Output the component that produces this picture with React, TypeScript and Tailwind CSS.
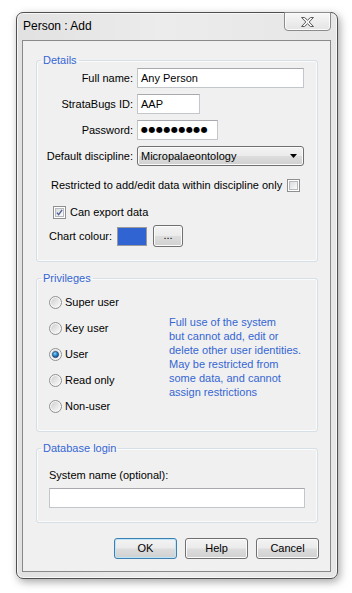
import React from "react";

const FONT = "font-['Liberation_Sans',Arial,sans-serif]";
const BTN_BG = "bg-[linear-gradient(#f3f3f3_0%,#ebebeb_48%,#dddddd_52%,#d0d0d0_100%)]";

const Checkbox = ({ checked = false }: { checked?: boolean }) => (
  <span className="flex size-[13px] shrink-0 items-center justify-center border border-[#8e8f8f] bg-white p-[1px]">
    <span className="flex size-full items-center justify-center border border-[#b6b9bd] bg-gradient-to-br from-[#dcdcdc] to-[#fbfbfb]">
      {checked && (
        <svg width="9" height="9" viewBox="0 0 9 9">
          <path d="M1.2 4.6 L3.4 7.2 L7.8 1.2" fill="none" stroke="#4a5f97" strokeWidth="1.7" />
        </svg>
      )}
    </span>
  </span>
);

const Radio = ({ checked = false }: { checked?: boolean }) => (
  <svg width="13" height="13" viewBox="0 0 13 13" className="shrink-0">
    <defs>
      <linearGradient id="radioFill" x1="0" y1="0" x2="1" y2="1">
        <stop offset="0" stopColor="#cfcfcf" />
        <stop offset="1" stopColor="#fafafa" />
      </linearGradient>
      <radialGradient id="radioDot" cx="0.4" cy="0.35" r="0.7">
        <stop offset="0" stopColor="#8ad8ff" />
        <stop offset="0.5" stopColor="#2a86cf" />
        <stop offset="1" stopColor="#13406f" />
      </radialGradient>
    </defs>
    <circle cx="6.5" cy="6.5" r="6" fill="#f6f6f6" stroke="#8e8f8f" />
    <circle cx="6.5" cy="6.5" r="4.4" fill="url(#radioFill)" />
    {checked && <circle cx="6.5" cy="6.5" r="3.1" fill="url(#radioDot)" stroke="#1b3f6a" strokeWidth="0.7" />}
  </svg>
);

const TextBox = ({ className = "", children }: { className?: string; children?: React.ReactNode }) => (
  <div
    className={`flex h-[20px] items-center border border-[#c3c6cb] border-t-[#a7a9ae] bg-white px-[3px] ${className}`}
  >
    {children}
  </div>
);

const Button = ({ children, primary = false }: { children: React.ReactNode; primary?: boolean }) => (
  <button
    className={
      primary
        ? `h-[21px] w-[63px] rounded-[3px] border border-[#3c7fb1] ${BTN_BG} shadow-[inset_0_0_0_1px_#bfe6f8]`
        : `h-[21px] w-[63px] rounded-[3px] border border-[#707070] ${BTN_BG} shadow-[inset_0_0_0_1px_#fbfbfb]`
    }
  >
    {children}
  </button>
);

const Group = ({
  title,
  className = "",
  children,
}: {
  title: string;
  className?: string;
  children: React.ReactNode;
}) => (
  <fieldset
    className={`ml-[13px] w-[282px] rounded-[3px] border border-[#d5dfe5] shadow-[inset_0_0_0_1px_#fbfbfb] ${className}`}
  >
    <legend className="ml-[4px] px-[2px] leading-[14px] text-[#3566d3]">{title}</legend>
    {children}
  </fieldset>
);

const ROLES = [
  { id: 1, title: "Super user" },
  { id: 2, title: "Key user" },
  { id: 3, title: "User" },
  { id: 4, title: "Read only" },
  { id: 5, title: "Non-user" },
];

const App = () => {
  return (
    <div className={`h-[593px] w-[352px] bg-white pl-[16px] pt-[12px] text-[11px] text-black ${FONT}`}>
      <div className="flex h-[567px] w-[322px] flex-col rounded-[7px] border border-[#4f4f4f] bg-[linear-gradient(90deg,#e1e1e1,#ececec_45%,#e6e6e6)] pb-[6px] pl-[5px] pr-[6px] shadow-[2px_3px_9px_rgba(0,0,0,0.35),inset_0_0_0_1px_#f7f7f7]">
        {/* Title bar */}
        <div className="flex h-[27px] items-start justify-between">
          <span className="pl-[1px] pt-[5px] text-[12px] leading-[16px]">Person : Add</span>
          <button className="-mt-px flex h-[19px] w-[47px] items-center justify-center rounded-b-[4px] border border-[#8b8b8b] bg-[linear-gradient(#f7f7f7,#e4e4e4)] shadow-[inset_0_0_0_1px_#fbfbfb]">
            <svg width="13" height="10" viewBox="0 0 13 10">
              <path
                d="M0.5 0.5 H3.6 L6.5 3.2 L9.4 0.5 H12.5 L8.2 5 L12.5 9.5 H9.4 L6.5 6.8 L3.6 9.5 H0.5 L4.8 5 Z"
                fill="#f4f4f4"
                stroke="#5c5c5c"
                strokeWidth="1"
                strokeLinejoin="round"
              />
            </svg>
          </button>
        </div>

        {/* Client area */}
        <div className="flex h-[532px] flex-col border border-[#898989] bg-[#f0f0f0]">
          <Group title="Details" className="mt-[12px] pb-[14px] pt-[1px]">
            <div className="flex flex-col gap-[6px] pl-[6px]">
              <div className="flex items-center">
                <span className="mr-[4px] w-[90px] whitespace-nowrap text-right">Full name:</span>
                <TextBox className="w-[167px]">Any Person</TextBox>
              </div>
              <div className="flex items-center">
                <span className="mr-[4px] w-[90px] whitespace-nowrap text-right">StrataBugs ID:</span>
                <TextBox className="w-[63px]">AAP</TextBox>
              </div>
              <div className="flex items-center">
                <span className="mr-[4px] w-[90px] whitespace-nowrap text-right">Password:</span>
                <TextBox className="w-[81px]">
                  <span className="font-['DejaVu_Sans',sans-serif] text-[8px] tracking-[0.5px]">●●●●●●●●●</span>
                </TextBox>
              </div>
              <div className="flex items-center">
                <span className="mr-[4px] w-[90px] whitespace-nowrap text-right">Default discipline:</span>
                <div className={`flex h-[20px] w-[167px] items-center justify-between rounded-[3px] border border-[#707070] ${BTN_BG} pl-[3px] pr-[6px] shadow-[inset_0_0_0_1px_#fbfbfb]`}>
                  <span>Micropalaeontology</span>
                  <svg width="7" height="4" viewBox="0 0 7 4">
                    <path d="M0 0 H7 L3.5 4 Z" fill="#000" />
                  </svg>
                </div>
              </div>
            </div>

            <div className="mt-[9px] flex h-[20px] items-center gap-[5px] pl-[14px]">
              <span>Restricted to add/edit data within discipline only</span>
              <Checkbox />
            </div>
            <div className="mt-[7px] flex h-[20px] items-center gap-[4px] pl-[16px]">
              <Checkbox checked />
              <span>Can export data</span>
            </div>
            <div className="mt-[3px] flex h-[22px] items-center pl-[12px]">
              <span className="w-[68px]">Chart colour:</span>
              <span className="h-[19px] w-[30px] border border-[#9a9a9a] bg-[#3064d2]" />
              <button className={`ml-[6px] h-[22px] w-[30px] rounded-[3px] border border-[#707070] ${BTN_BG} pb-[2px] leading-none shadow-[inset_0_0_0_1px_#fbfbfb]`}>
                ...
              </button>
            </div>
          </Group>

          <Group title="Privileges" className="mt-[9px] pb-[15px] pt-[7px]">
            <div className="flex pl-[12px]">
              <div className="flex w-[120px] flex-col gap-[6px]">
                {ROLES.map((role) => (
                  <label key={role.id} className="flex h-[20px] items-center gap-[3px]">
                    <Radio checked={role.id === 3} />
                    <span>{role.title}</span>
                  </label>
                ))}
              </div>
              <p className="mt-[23px] leading-[14px] text-[#3566d3]">
                Full use of the system
                <br />
                but cannot add, edit or
                <br />
                delete other user identities.
                <br />
                May be restricted from
                <br />
                some data, and cannot
                <br />
                assign restrictions
              </p>
            </div>
          </Group>

          <Group title="Database login" className="mt-[9px] pb-[14px] pt-[13px]">
            <div className="pl-[12px]">
              <p className="leading-[14px]">System name (optional):</p>
              <TextBox className="mt-[6px] w-[256px]" />
            </div>
          </Group>

          {/* Buttons */}
          <div className="mr-[11px] mt-[15px] flex justify-end gap-[8px]">
            <Button primary>OK</Button>
            <Button>Help</Button>
            <Button>Cancel</Button>
          </div>
        </div>
      </div>
    </div>
  );
};

export default App;
